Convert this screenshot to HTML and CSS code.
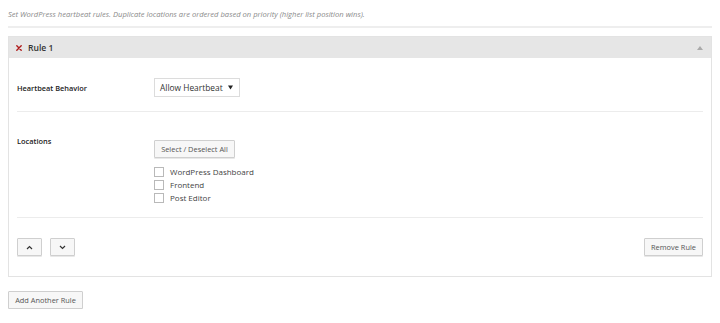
FILE: index.html
```html
<!DOCTYPE html>
<html>
<head>
<meta charset="utf-8">
<link rel="stylesheet" href="styles.css">
</head>
<body>
<div class="wrap">
  <p class="intro">Set WordPress heartbeat rules. Duplicate locations are ordered based on priority (higher list position wins).</p>
  <div class="panel">
    <div class="panel-head">
      <span class="remove-x">
        <svg width="6" height="6" viewBox="0 0 6 6"><path d="M0.8 0.8L5.2 5.2M5.2 0.8L0.8 5.2" stroke="#b01c1c" stroke-width="1.4" stroke-linecap="round"/></svg>
      </span>
      <span class="title">Rule 1</span>
      <span class="toggle">
        <svg width="6" height="4" viewBox="0 0 6 4"><path d="M0 4L3 0L6 4Z" fill="#aaa"/></svg>
      </span>
    </div>
    <div class="panel-body">
      <div class="row row-behavior">
        <div class="label">Heartbeat Behavior</div>
        <div class="control">
          <div class="select">
            <span>Allow Heartbeat</span>
            <svg width="5" height="5" viewBox="0 0 5 5"><path d="M0 0.5H5L2.5 4.5Z" fill="#222"/></svg>
          </div>
        </div>
      </div>
      <div class="row row-locations">
        <div class="label">Locations</div>
        <div class="control control-locations">
          <button class="btn btn-select">Select / Deselect All</button>
          <ul class="checks">
            <li><span class="box"></span>WordPress Dashboard</li>
            <li><span class="box"></span>Frontend</li>
            <li><span class="box"></span>Post Editor</li>
          </ul>
        </div>
      </div>
      <div class="row row-actions">
        <div class="moves">
          <button class="btn btn-icon">
            <svg width="7" height="5" viewBox="0 0 7 5"><path d="M1 4L3.5 1.5L6 4" fill="none" stroke="#333" stroke-width="1.2"/></svg>
          </button>
          <button class="btn btn-icon">
            <svg width="7" height="5" viewBox="0 0 7 5"><path d="M1 1L3.5 3.5L6 1" fill="none" stroke="#333" stroke-width="1.2"/></svg>
          </button>
        </div>
        <button class="btn btn-remove">Remove Rule</button>
      </div>
    </div>
  </div>
  <button class="btn btn-add">Add Another Rule</button>
</div>
</body>
</html>
```

FILE: styles.css
```css
html, body {
  margin: 0;
  padding: 0;
  background: #fff;
}
body {
  font-family: "Open Sans", "Noto Sans", sans-serif;
  color: #333;
  font-size: 8px;
}
.wrap {
  padding: 0 8px;
  width: 704px;
}
.intro {
  margin: 0;
  padding-top: 9px;
  height: 17px;
  border-bottom: 2px solid #eeeeee;
  font-style: italic;
  font-size: 7.6px;
  color: #8a8a8a;
  line-height: 10px;
}
.panel {
  margin-top: 8px;
  border: 1px solid #e3e3e3;
  background: #fff;
}
.panel-head {
  height: 21px;
  background: #e6e6e6;
  display: flex;
  align-items: center;
  padding: 0 8px 0 7px;
}
.remove-x {
  display: flex;
  width: 6px;
  height: 6px;
  margin-right: 6px;
}
.title {
  font-size: 8.6px;
  font-weight: 600;
  color: #333;
  flex: 1;
}
.toggle {
  display: flex;
}
.panel-body {
  padding: 0 8px;
}
.row {
  display: flex;
  border-bottom: 1px solid #ececec;
}
.label {
  width: 137px;
  font-weight: 600;
  font-size: 7.4px;
  color: #222;
}
.row-behavior {
  padding: 20px 0 14px;
  align-items: center;
}
.select {
  border: 1px solid #dcdcdc;
  display: flex;
  align-items: center;
  justify-content: space-between;
  padding: 0 6px 0 5px;
  box-sizing: border-box;
  width: 86px;
  height: 19px;
  font-size: 8.4px;
  color: #333;
}
.row-locations {
  padding: 22px 0 13px;
}
.row-locations .label {
  padding-top: 2px;
}
.control-locations {
  padding-top: 6px;
}
.btn {
  font-family: "Open Sans", "Noto Sans", sans-serif;
  background: #f7f7f7;
  border: 1px solid #cfcfcf;
  border-radius: 1px;
  color: #555;
  font-size: 7.4px;
  padding: 0;
  margin: 0;
  box-shadow: 0 1px 0 #e8e8e8;
  cursor: pointer;
}
.btn-select {
  width: 81px;
  height: 18px;
  display: block;
}
.checks {
  list-style: none;
  margin: 7px 0 0;
  padding: 0;
}
.checks li {
  display: flex;
  align-items: center;
  height: 13px;
  font-size: 8px;
  color: #444;
}
.box {
  width: 8px;
  height: 8px;
  border: 1px solid #b9b9b9;
  background: #fff;
  margin-right: 6px;
}
.row-actions {
  border-bottom: none;
  justify-content: space-between;
  align-items: center;
  padding: 20px 0 20px;
}
.moves {
  display: flex;
  gap: 8px;
}
.btn-icon {
  width: 25px;
  height: 18px;
  display: flex;
  align-items: center;
  justify-content: center;
}
.btn-remove {
  width: 59px;
  height: 18px;
}
.btn-add {
  margin-top: 14px;
  width: 75px;
  height: 18px;
}
```
